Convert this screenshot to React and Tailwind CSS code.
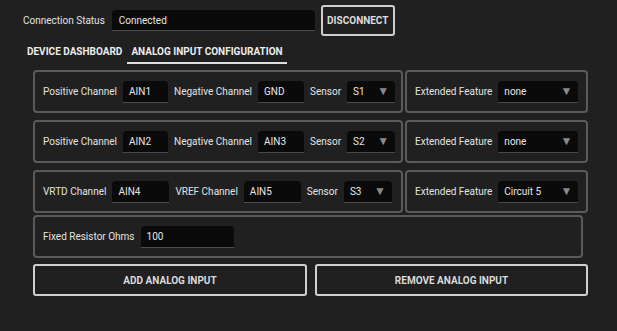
import React from 'react';

const Field = ({ value, width, select }) => (
  <div
    className={`flex items-center justify-between h-[22px] rounded-t-[4px] bg-[#0a0a0a] border-b border-[#4a4a4a] pl-[6px] pr-[6px] text-[10px] text-[#e6e6e6] ${width}`}
  >
    <span>{value}</span>
    {select && <span className="text-[12px] leading-none text-[#8a8a8a]">▼</span>}
  </div>
);

const Label = ({ children }) => (
  <span className="text-[10px] text-[#e2e2e2] whitespace-nowrap">{children}</span>
);

const Box = ({ width, children }) => (
  <div className={`flex items-center gap-[6px] h-[43px] border-2 border-[#5a5a5a] rounded-[4px] pl-[8px] ${width}`}>
    {children}
  </div>
);

const rows = [
  { a: 'Positive Channel', av: 'AIN1', aw: 'w-[45px]', b: 'Negative Channel', bv: 'GND', bw: 'w-[46px]', s: 'S1', ext: 'none' },
  { a: 'Positive Channel', av: 'AIN2', aw: 'w-[45px]', b: 'Negative Channel', bv: 'AIN3', bw: 'w-[46px]', s: 'S2', ext: 'none' },
  { a: 'VRTD Channel', av: 'AIN4', aw: 'w-[57px]', b: 'VREF Channel', bv: 'AIN5', bw: 'w-[57px]', s: 'S3', ext: 'Circuit 5' },
];

export default function App() {
  return (
    <div className="w-full h-[331px] bg-[#202020] font-['Roboto',sans-serif] overflow-hidden">
      {/* connection bar */}
      <div className="flex items-center pt-[5px] pl-[23px]">
        <Label>Connection Status</Label>
        <div className="ml-[7px] flex items-center w-[203px] h-[21px] rounded-t-[4px] bg-[#0a0a0a] border-b border-[#4a4a4a] px-[7px] text-[10px] text-[#e6e6e6]">
          Connected
        </div>
        <button className="ml-[6px] w-[74px] h-[31px] border-2 border-[#cfcfcf] rounded-[3px] text-[10px] font-bold text-[#dcdcdc]">
          DISCONNECT
        </button>
      </div>

      {/* tabs */}
      <div className="flex items-end pl-[27px] mt-[8px] text-[10px] font-bold text-[#ececec]">
        <span className="pb-[5px]">DEVICE DASHBOARD</span>
        <span className="ml-[5px] px-[4px] pb-[3px] border-b-2 border-[#dedede]">ANALOG INPUT CONFIGURATION</span>
      </div>

      <div className="flex flex-col pl-[33px] mt-[6px]">
        {rows.map((r, i) => (
          <div key={i} className={`flex gap-[2px] ${i > 0 ? 'mt-[7px]' : ''}`}>
            <Box width="w-[370px]">
              <Label>{r.a}</Label>
              <Field value={r.av} width={r.aw} />
              <Label>{r.b}</Label>
              <Field value={r.bv} width={r.bw} />
              <Label>Sensor</Label>
              <Field value={r.s} width="w-[48px]" select />
            </Box>
            <Box width="w-[183px]">
              <Label>Extended Feature</Label>
              <Field value={r.ext} width="w-[80px]" select />
            </Box>
          </div>
        ))}

        <div className="mt-[2px]">
          <Box width="w-[550px]">
            <Label>Fixed Resistor Ohms</Label>
            <Field value="100" width="w-[93px]" />
          </Box>
        </div>

        <div className="flex gap-[8px] mt-[6px]">
          <button className="w-[274px] h-[32px] border-2 border-[#d0d0d0] rounded-[3px] text-[10px] font-bold text-[#dadada]">
            ADD ANALOG INPUT
          </button>
          <button className="w-[273px] h-[32px] border-2 border-[#d0d0d0] rounded-[3px] text-[10px] font-bold text-[#dadada]">
            REMOVE ANALOG INPUT
          </button>
        </div>
      </div>
    </div>
  );
}
